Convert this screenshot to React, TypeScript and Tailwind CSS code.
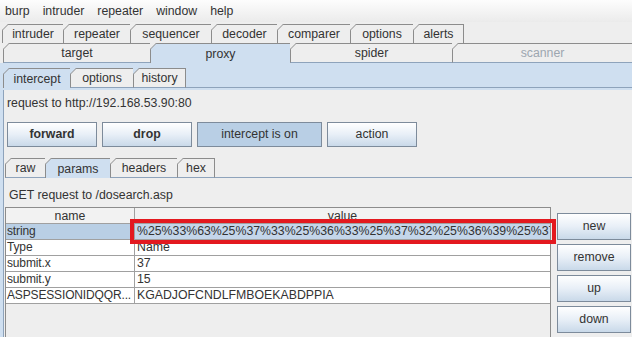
import React from "react";

type TabDef = { label: string; cls: string; sel?: boolean; disabled?: boolean };

function Tab({ t, behind, bottom }: { t: TabDef; behind: string; bottom?: boolean }) {
  return (
    <div
      className={`relative flex items-center justify-center border-l border-t border-[#8c8c8c] ${t.cls} ${
        t.sel ? "bg-[#cfdff0]" : "bg-[#eeeeee]"
      } ${bottom && !t.sel ? "border-b border-b-[#8ea3bb]" : ""}`}
    >
      <svg width="7" height="7" className="absolute -left-px -top-px">
        <polygon points="0,0 6.5,0 0,6.5" fill={behind} />
        <line x1="0" y1="6.5" x2="6.5" y2="0" stroke="#8c8c8c" strokeWidth="1" />
      </svg>
      <span className={`leading-[14px] ${t.disabled ? "text-[#9da6b0]" : "text-[#333333]"}`}>{t.label}</span>
    </div>
  );
}

function Btn({ label, cls, bold, on }: { label: string; cls: string; bold?: boolean; on?: boolean }) {
  return (
    <div
      className={`flex items-center justify-center border border-[#7d8b9b] text-[#333333] ${cls} ${
        on ? "bg-[#b9cfe5]" : "bg-gradient-to-b from-[#ffffff] via-[#e8eff7] to-[#c9d9e9]"
      } ${bold ? "font-bold" : ""}`}
    >
      {label}
    </div>
  );
}

const row1: TabDef[] = [
  { label: "intruder", cls: "w-[61px] h-[19px]" },
  { label: "repeater", cls: "w-[67px] h-[19px]" },
  { label: "sequencer", cls: "w-[81px] h-[19px]" },
  { label: "decoder", cls: "w-[66px] h-[19px]" },
  { label: "comparer", cls: "w-[73px] h-[19px]" },
  { label: "options", cls: "w-[63px] h-[19px]" },
  { label: "alerts", cls: "w-[51px] h-[19px] border-r" },
];

const row2: TabDef[] = [
  { label: "target", cls: "w-[147px] h-[20px]" },
  { label: "proxy", cls: "w-[140px] h-[20px]", sel: true },
  { label: "spider", cls: "w-[162px] h-[20px]" },
  { label: "scanner", cls: "flex-1 h-[20px]", disabled: true },
];

const sub1: TabDef[] = [
  { label: "intercept", cls: "w-[67px] h-[20px]", sel: true },
  { label: "options", cls: "w-[63px] h-[20px]" },
  { label: "history", cls: "w-[53px] h-[20px] border-r" },
];

const sub2: TabDef[] = [
  { label: "raw", cls: "w-[40px] h-[20px]" },
  { label: "params", cls: "w-[65px] h-[20px]", sel: true },
  { label: "headers", cls: "w-[67px] h-[20px]" },
  { label: "hex", cls: "w-[38px] h-[20px] border-r" },
];

const rows = [
  { name: "string", value: "%25%33%63%25%37%33%25%36%33%25%37%32%25%36%39%25%37%30%25%37%34", sel: true },
  { name: "Type", value: "Name" },
  { name: "submit.x", value: "37" },
  { name: "submit.y", value: "15" },
  { name: "ASPSESSIONIDQQR...", value: "KGADJOFCNDLFMBOEKABDPPIA" },
];

export default function App() {
  return (
    <div className="relative w-[632px] h-[337px] overflow-hidden bg-[#eeeeee] text-[12.3px] text-[#333333] font-['Liberation_Sans',Arial,sans-serif] flex flex-col">
      {/* menu bar */}
      <div className="h-[22px] shrink-0 flex items-center gap-[13px] pl-[5px] bg-gradient-to-b from-[#fdfdfd] to-[#ebebeb]">
        <span>burp</span>
        <span>intruder</span>
        <span>repeater</span>
        <span>window</span>
        <span>help</span>
      </div>

      {/* tab row 1 */}
      <div className="h-[21px] shrink-0 flex items-end pl-[2px]">
        {row1.map((t) => (
          <Tab key={t.label} t={t} behind="#eeeeee" />
        ))}
      </div>

      {/* tab row 2 */}
      <div className="h-[20px] shrink-0 flex pl-[3px]">
        {row2.map((t) => (
          <Tab key={t.label} t={t} behind="#eeeeee" bottom />
        ))}
      </div>

      {/* proxy panel */}
      <div className="flex-1 flex flex-col bg-[#cfdff0] pl-[3px] pt-[5px]">
        <div className="h-[20px] shrink-0 flex">
          {sub1.map((t) => (
            <Tab key={t.label} t={t} behind="#cfdff0" bottom />
          ))}
          <div className="flex-1 border-b border-[#8ea3bb]" />
        </div>
        <div className="h-[2px] shrink-0" />

        {/* intercept content */}
        <div className="flex-1 flex flex-col bg-[#eeeeee] border-l border-[#8ea3bb]">
          <div className="pl-[3px] pt-[6px] h-[20px] leading-[14px]">request to http://192.168.53.90:80</div>
          <div className="flex gap-[5px] pl-[3px] mt-[12px]">
            <Btn label="forward" cls="w-[90px] h-[25px]" bold />
            <Btn label="drop" cls="w-[90px] h-[25px]" bold />
            <Btn label="intercept is on" cls="w-[125px] h-[25px]" on />
            <Btn label="action" cls="w-[90px] h-[25px]" />
          </div>

          <div className="h-[20px] shrink-0 flex pl-[1px] mt-[11px]">
            {sub2.map((t) => (
              <Tab key={t.label} t={t} behind="#eeeeee" bottom />
            ))}
            <div className="flex-1 border-b border-[#8ea3bb]" />
          </div>

          {/* params panel */}
          <div className="flex-1 flex flex-col">
            <div className="pl-[5px] pt-[10px] h-[24px] leading-[14px]">GET request to /dosearch.asp</div>
            <div className="flex-1 flex mt-[5px] ml-[1px]">
              <div className="w-[546px] flex flex-col border-l border-r border-t border-[#8c8c8c]">
                <div className="h-[16px] flex border-b border-[#a0a0a0] bg-[#f2f2f2]">
                  <div className="w-[129px] border-r border-[#a0a0a0] flex items-center justify-center leading-[14px]">name</div>
                  <div className="flex-1 flex items-center justify-center leading-[14px]">value</div>
                </div>
                {rows.map((r) => (
                  <div key={r.name} className="h-[16px] flex border-b border-[#a0a0a0] bg-white">
                    <div
                      className={`w-[129px] border-r border-[#a0a0a0] pl-[1px] text-[12px] tracking-[-0.15px] leading-[15px] overflow-hidden whitespace-nowrap ${
                        r.sel ? "bg-[#b9cfe5]" : ""
                      }`}
                    >
                      {r.name}
                    </div>
                    <div
                      className={`flex-1 pl-[2px] leading-[15px] overflow-hidden whitespace-nowrap ${
                        r.sel ? "bg-[#c4d6ea]" : ""
                      }`}
                    >
                      {r.value}
                    </div>
                  </div>
                ))}
              </div>
              <div className="flex flex-col gap-[4px] ml-[6px] mt-[6px]">
                <Btn label="new" cls="w-[74px] h-[27px]" />
                <Btn label="remove" cls="w-[74px] h-[27px]" />
                <Btn label="up" cls="w-[74px] h-[27px]" />
                <Btn label="down" cls="w-[74px] h-[27px]" />
              </div>
            </div>
          </div>
        </div>
      </div>

      {/* red highlight box */}
      <div className="absolute left-[130px] top-[219px] w-[426px] h-[25px] border-4 border-[#e3191f]" />
    </div>
  );
}
